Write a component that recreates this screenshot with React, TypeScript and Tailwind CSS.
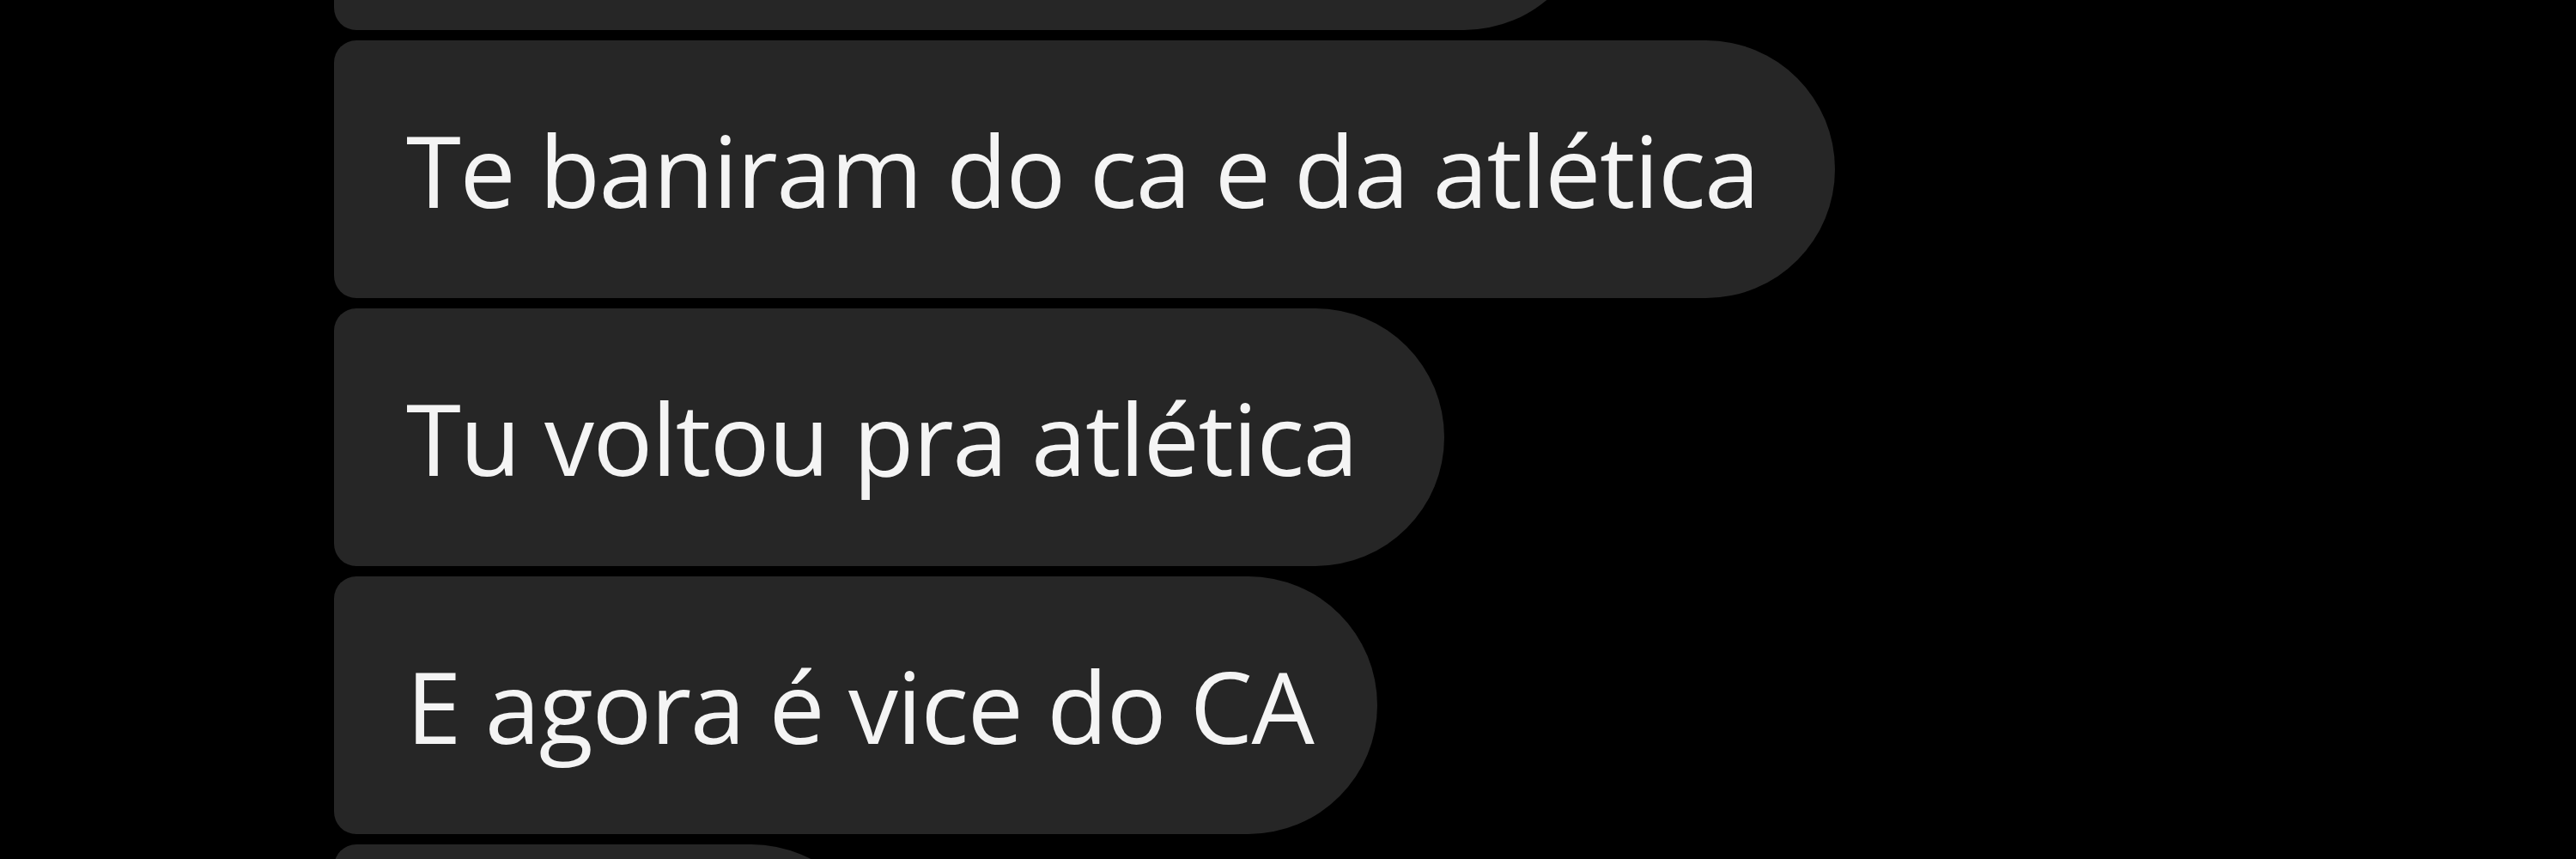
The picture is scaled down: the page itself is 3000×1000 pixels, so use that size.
import React from "react";

const messages = [
  { text: "Te baniram do ca e da atlética", width: "w-[1748px]" },
  { text: "Tu voltou pra atlética", width: "w-[1293px]" },
  { text: "E agora é vice do CA", width: "w-[1215px]" },
];

function Bubble({ text, width }: { text: string; width: string }) {
  return (
    <div className={`flex h-[300px] ${width} items-center rounded-l-[26px] rounded-r-[150px] bg-[#262626] pl-[84px]`}>
      <span className="whitespace-nowrap text-[116px] leading-none tracking-[-1.4px] text-[#f4f4f4] [font-family:'Open_Sans','Noto_Sans',sans-serif]">
        {text}
      </span>
    </div>
  );
}

export default function App() {
  return (
    <div className="h-[1000px] w-[3000px] overflow-hidden bg-black">
      <div className="ml-[389px] mt-[-265px] flex flex-col gap-[12px]">
        <div className="h-[300px] w-[1466px] rounded-l-[26px] rounded-r-[150px] bg-[#262626]" />
        {messages.map((m) => (
          <Bubble key={m.text} text={m.text} width={m.width} />
        ))}
        <div className="h-[300px] w-[636px] rounded-l-[26px] rounded-r-[150px] bg-[#262626]" />
      </div>
    </div>
  );
}
